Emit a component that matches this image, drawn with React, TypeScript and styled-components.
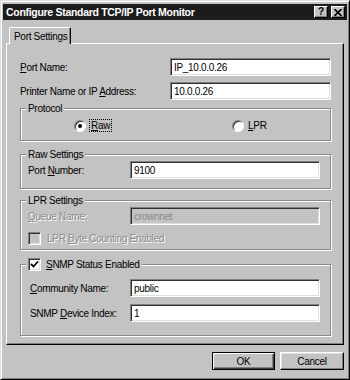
import * as React from 'react';
import styled, { createGlobalStyle, css } from 'styled-components';

const GlobalStyle = createGlobalStyle`
  html, body {
    margin: 0;
    padding: 0;
    background: #c3c3c3;
  }
  body {
    font-family: 'Liberation Sans', Arial, sans-serif;
    font-size: 10px;
    letter-spacing: -0.3px;
    color: #000;
  }
`;

const sunken = css`
  border: 1px solid;
  border-color: #808080 #fff #fff #808080;
  box-shadow: inset 1px 1px #303030, inset -1px -1px #dfdfdf;
`;

const Window = styled.div`
  width: 350px;
  height: 380px;
  box-sizing: border-box;
  background: #c3c3c3;
  border: 1px solid;
  border-color: #dfdfdf #000 #000 #dfdfdf;
  box-shadow: inset 1px 1px #fff, inset -1px -1px #808080;
  padding: 3px 2px 0 2px;
  display: flex;
  flex-direction: column;
`;

const TitleBar = styled.div`
  height: 16px;
  background: #1c1c1c;
  display: flex;
  align-items: center;
  justify-content: space-between;
  padding: 0 2px 0 3px;
`;

const Title = styled.span`
  color: #fff;
  font-weight: bold;
  font-size: 10.5px;
`;

const TitleButtons = styled.div`
  display: flex;
  gap: 3px;
`;

const TitleButton = styled.span`
  width: 14px;
  height: 12px;
  box-sizing: border-box;
  background: #c3c3c3;
  border: 1px solid;
  border-color: #fff #000 #000 #fff;
  box-shadow: inset -1px -1px #808080;
  display: flex;
  align-items: center;
  justify-content: center;
  font-weight: bold;
  font-size: 10px;
  line-height: 10px;
`;

const Body = styled.div`
  padding: 7px 3px 0 3px;
  display: flex;
  flex-direction: column;
`;

const TabStrip = styled.div`
  display: flex;
  padding-left: 3px;
`;

const Tab = styled.div`
  position: relative;
  z-index: 1;
  height: 17px;
  margin-bottom: -1px;
  box-sizing: border-box;
  padding: 3px 3px 0 4px;
  background: #c3c3c3;
  border-top: 1px solid #fff;
  border-left: 1px solid #fff;
  border-right: 1px solid #000;
  border-radius: 2px 2px 0 0;
  box-shadow: inset -1px 0 #808080;
`;

const Panel = styled.div`
  height: 302px;
  box-sizing: border-box;
  border: 1px solid;
  border-color: #fff #000 #000 #fff;
  box-shadow: inset -1px -1px #808080;
  padding: 14px 12px 0 13px;
  display: flex;
  flex-direction: column;
`;

const Rows = styled.div<{ $gap: number; $indent?: number }>`
  display: flex;
  flex-direction: column;
  gap: ${(p) => p.$gap}px;
  padding-left: ${(p) => p.$indent ?? 0}px;
`;

const FieldRow = styled.div`
  display: flex;
  align-items: center;
  height: 18px;
`;

const Label = styled.span<{ $disabled?: boolean }>`
  flex: 1;
  white-space: nowrap;
  ${(p) =>
    p.$disabled &&
    css`
      color: #8a8a8a;
      text-shadow: 1px 1px #fff;
    `}
`;

const TextBox = styled.div<{ $width: number; $disabled?: boolean }>`
  ${sunken};
  width: ${(p) => p.$width}px;
  height: 18px;
  box-sizing: border-box;
  background: ${(p) => (p.$disabled ? '#c3c3c3' : '#fff')};
  color: ${(p) => (p.$disabled ? '#8a8a8a' : '#000')};
  padding: 0 3px;
  display: flex;
  align-items: center;
`;

const Key = styled.span`
  text-decoration: underline;
`;

const Group = styled.fieldset<{ $top: number; $pt: number; $pb: number }>`
  margin: ${(p) => p.$top}px 0 0 0;
  padding: ${(p) => p.$pt}px 10px ${(p) => p.$pb}px 7px;
  min-inline-size: 0;
  border: 1px solid #8a8a8a;
  box-shadow: inset 1px 1px #fff, 1px 1px #fff;
`;

const Legend = styled.legend`
  padding: 0 2px;
  margin-left: -2px;
  line-height: 13px;
  height: 13px;
  display: flex;
  align-items: center;
  gap: 5px;
  background: #c3c3c3;
`;

const RadioRow = styled.div`
  display: flex;
  align-items: center;
  height: 13px;
  padding-left: 46px;
`;

const RadioItem = styled.div<{ $width?: number }>`
  display: flex;
  align-items: center;
  gap: 4px;
  width: ${(p) => (p.$width ? `${p.$width}px` : 'auto')};
`;

const Radio = styled.span<{ $checked?: boolean }>`
  width: 12px;
  height: 12px;
  box-sizing: border-box;
  border-radius: 50%;
  background: #fff;
  border: 1px solid;
  border-color: #808080 #fff #fff #808080;
  box-shadow: inset 1px 1px #303030;
  display: flex;
  align-items: center;
  justify-content: center;

  &::after {
    content: '';
    width: 4px;
    height: 4px;
    border-radius: 50%;
    background: #000;
    display: ${(p) => (p.$checked ? 'block' : 'none')};
  }
`;

const Focus = styled.span`
  outline: 1px dotted #000;
  outline-offset: 0;
  padding: 0 1px;
`;

const CheckRow = styled.div<{ $top: number }>`
  display: flex;
  align-items: center;
  gap: 6px;
  height: 13px;
  margin-top: ${(p) => p.$top}px;
`;

const CheckBox = styled.span<{ $disabled?: boolean }>`
  ${sunken};
  width: 13px;
  height: 13px;
  box-sizing: border-box;
  background: ${(p) => (p.$disabled ? '#c3c3c3' : '#fff')};
  display: flex;
  align-items: center;
  justify-content: center;
  flex: none;
`;

const ButtonRow = styled.div`
  display: flex;
  justify-content: flex-end;
  gap: 5px;
  margin-top: 7px;
`;

const Button = styled.button<{ $default?: boolean; $width: number }>`
  width: ${(p) => p.$width}px;
  height: 18px;
  box-sizing: border-box;
  padding: 0;
  font: inherit;
  letter-spacing: inherit;
  color: #000;
  background: #c3c3c3;
  border: 1px solid;
  ${(p) =>
    p.$default
      ? css`
          border-color: #000;
          box-shadow: inset 1px 1px #fff, inset -1px -1px #404040, inset -2px -2px #808080;
        `
      : css`
          border-color: #fff #000 #000 #fff;
          box-shadow: inset -1px -1px #808080, inset 1px 1px #dfdfdf;
        `}
`;

const Check = () => (
  <svg width='9' height='9' viewBox='0 0 9 9'>
    <polyline points='1,4 3.5,6.5 8,1.5' fill='none' stroke='#000' strokeWidth='1.8' />
  </svg>
);

const CloseGlyph = () => (
  <svg width='8' height='7' viewBox='0 0 8 7'>
    <path d='M0.5 0 L7.5 7 M7.5 0 L0.5 7' stroke='#000' strokeWidth='1.6' />
  </svg>
);

export default function App() {
  return (
    <>
      <GlobalStyle />
      <Window>
        <TitleBar>
          <Title>Configure Standard TCP/IP Port Monitor</Title>
          <TitleButtons>
            <TitleButton>?</TitleButton>
            <TitleButton>
              <CloseGlyph />
            </TitleButton>
          </TitleButtons>
        </TitleBar>

        <Body>
          <TabStrip>
            <Tab>Port Settings</Tab>
          </TabStrip>
          <Panel>
            <Rows $gap={6}>
              <FieldRow>
                <Label>
                  <Key>P</Key>ort Name:
                </Label>
                <TextBox $width={161}>IP_10.0.0.26</TextBox>
              </FieldRow>
              <FieldRow>
                <Label>
                  Printer Name or IP <Key>A</Key>ddress:
                </Label>
                <TextBox $width={161}>10.0.0.26</TextBox>
              </FieldRow>
            </Rows>

            <Group $top={2} $pt={4} $pb={8}>
              <Legend>Protocol</Legend>
              <RadioRow>
                <RadioItem $width={158}>
                  <Radio $checked />
                  <Focus>
                    <Key>R</Key>aw
                  </Focus>
                </RadioItem>
                <RadioItem>
                  <Radio />
                  <span>
                    <Key>L</Key>PR
                  </span>
                </RadioItem>
              </RadioRow>
            </Group>

            <Group $top={7} $pt={0} $pb={9}>
              <Legend>Raw Settings</Legend>
              <FieldRow>
                <Label>
                  Port <Key>N</Key>umber:
                </Label>
                <TextBox $width={190}>9100</TextBox>
              </FieldRow>
            </Group>

            <Group $top={5} $pt={0} $pb={4}>
              <Legend>LPR Settings</Legend>
              <FieldRow>
                <Label $disabled>
                  <Key>Q</Key>ueue Name:
                </Label>
                <TextBox $width={190} $disabled>
                  crownnet
                </TextBox>
              </FieldRow>
              <CheckRow $top={7}>
                <CheckBox $disabled />
                <Label $disabled>
                  LPR <Key>B</Key>yte Counting Enabled
                </Label>
              </CheckRow>
            </Group>

            <Group $top={8} $pt={8} $pb={13}>
              <Legend>
                <CheckBox>
                  <Check />
                </CheckBox>
                <span>
                  <Key>S</Key>NMP Status Enabled
                </span>
              </Legend>
              <Rows $gap={7} $indent={2}>
                <FieldRow>
                  <Label>
                    <Key>C</Key>ommunity Name:
                  </Label>
                  <TextBox $width={190}>public</TextBox>
                </FieldRow>
                <FieldRow>
                  <Label>
                    SNMP <Key>D</Key>evice Index:
                  </Label>
                  <TextBox $width={190}>1</TextBox>
                </FieldRow>
              </Rows>
            </Group>
          </Panel>

          <ButtonRow>
            <Button $default $width={63}>
              OK
            </Button>
            <Button $width={64}>Cancel</Button>
          </ButtonRow>
        </Body>
      </Window>
    </>
  );
}
